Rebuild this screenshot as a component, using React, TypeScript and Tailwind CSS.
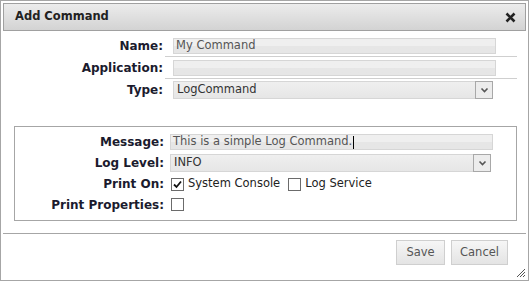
import React from "react";

const font = { fontFamily: '"DejaVu Sans", Verdana, sans-serif' };

function Chevron() {
  return (
    <svg width="9" height="6" viewBox="0 0 9 6">
      <path d="M1.5 1.5 L4.5 4.5 L7.5 1.5" fill="none" stroke="#555" strokeWidth="1.6" />
    </svg>
  );
}

function Select({ value, width }: { value: string; width: string }) {
  return (
    <div className={`flex h-[18px] ${width} items-center border border-[#d6d6d6] bg-gradient-to-b from-[#efefef] to-[#e6e6e6]`}>
      <span className="flex-1 pl-[3px] text-[11.5px] leading-none text-[#333]">{value}</span>
      <span className="flex h-[18px] w-[18px] -mr-px -my-px items-center justify-center border border-[#a8a8a8] bg-[#ececec]">
        <Chevron />
      </span>
    </div>
  );
}

function TextBox({ value, cursor }: { value: string; cursor?: boolean }) {
  return (
    <div className="flex h-[16px] w-[323px] items-center border border-[#d6d6d6] bg-gradient-to-b from-[#efefef] from-50% to-[#e6e6e6] to-50%">
      <span className="pl-[2px] text-[11.5px] leading-none text-[#555]">{value}</span>
      {cursor ? <span className="ml-px h-[13px] w-px bg-black" /> : null}
    </div>
  );
}

function Check({ checked }: { checked?: boolean }) {
  return (
    <span className="flex h-[13px] w-[13px] items-center justify-center border border-[#6b6b6b] bg-white">
      {checked ? (
        <svg width="9" height="9" viewBox="0 0 9 9">
          <path d="M1 4.5 L3.5 7 L8 1.5" fill="none" stroke="#111" strokeWidth="1.8" />
        </svg>
      ) : null}
    </span>
  );
}

const topRows = [
  { label: "Name:", line: true, h: "h-[21px]" },
  { label: "Application:", line: true, h: "h-[22px]" },
  { label: "Type:", line: false, h: "h-[21px]" },
];

const labelCls = "text-right text-[12px] font-bold text-[#1b1b2e]";

export default function App() {
  return (
    <div style={font} className="relative h-[281px] w-[529px] border border-[#a6a6a6] bg-white p-[2px]">
      <div className="flex h-[28px] items-center justify-between border border-[#a0a0a0] bg-gradient-to-b from-[#ececec] to-[#d3d3d3] pl-[11px] pr-[9px]">
        <span className="text-[11.5px] font-bold text-[#222]">Add Command</span>
        <svg width="11" height="11" viewBox="0 0 11 11">
          <path d="M1.5 1.5 L9.5 9.5 M9.5 1.5 L1.5 9.5" stroke="#222" strokeWidth="2.6" />
        </svg>
      </div>

      <div className="mt-[5px]">
        {topRows.map((row) => (
          <div key={row.label} className="flex">
            <div className={`flex ${row.h} w-[160px] items-center justify-end ${row.line ? "pb-px" : ""} ${labelCls}`}>
              {row.label}
            </div>
            <div
              className={`ml-[2px] flex ${row.h} w-[352px] items-center pl-[8px] ${row.line ? "border-b border-[#cfcfcf]" : ""}`}
            >
              {row.label === "Name:" ? <TextBox value="My Command" /> : null}
              {row.label === "Application:" ? <TextBox value="" /> : null}
              {row.label === "Type:" ? <Select value="LogCommand" width="w-[320px]" /> : null}
            </div>
          </div>
        ))}
      </div>

      <div className="ml-[11px] mt-[26px] w-[503px] border border-[#a6a6a6] py-[5px]">
        <div className="flex h-[20px] items-center">
          <div className={`w-[149px] ${labelCls}`}>Message:</div>
          <div className="ml-[6px]">
            <TextBox value="This is a simple Log Command." cursor />
          </div>
        </div>
        <div className="flex h-[22px] items-center">
          <div className={`w-[149px] ${labelCls}`}>Log Level:</div>
          <div className="ml-[6px]">
            <Select value="INFO" width="w-[321px]" />
          </div>
        </div>
        <div className="flex h-[20px] items-center">
          <div className={`w-[149px] ${labelCls}`}>Print On:</div>
          <div className="ml-[7px] flex items-center gap-[4px] text-[11.5px] text-[#222]">
            <Check checked />
            <span>System Console</span>
            <span className="ml-[4px]">
              <Check />
            </span>
            <span>Log Service</span>
          </div>
        </div>
        <div className="flex h-[21px] items-center">
          <div className={`w-[149px] ${labelCls}`}>Print Properties:</div>
          <div className="ml-[7px]">
            <Check />
          </div>
        </div>
      </div>

      <div className="mt-[12px] border-t border-[#a6a6a6]" />

      <div className="mt-[6px] flex justify-end gap-[6px] pr-[18px]">
        <button className="h-[25px] w-[49px] border border-[#cfcfcf] bg-gradient-to-b from-[#f6f6f6] to-[#e4e4e4] text-[11.5px] text-[#555]">
          Save
        </button>
        <button className="h-[25px] w-[57px] border border-[#cfcfcf] bg-gradient-to-b from-[#f6f6f6] to-[#e4e4e4] text-[11.5px] text-[#555]">
          Cancel
        </button>
      </div>

      <svg className="absolute bottom-[2px] right-[2px]" width="11" height="11" viewBox="0 0 11 11">
        <path d="M10 2 L2 10 M10 5 L5 10 M10 8 L8 10" stroke="#555" strokeWidth="1" />
      </svg>
    </div>
  );
}
